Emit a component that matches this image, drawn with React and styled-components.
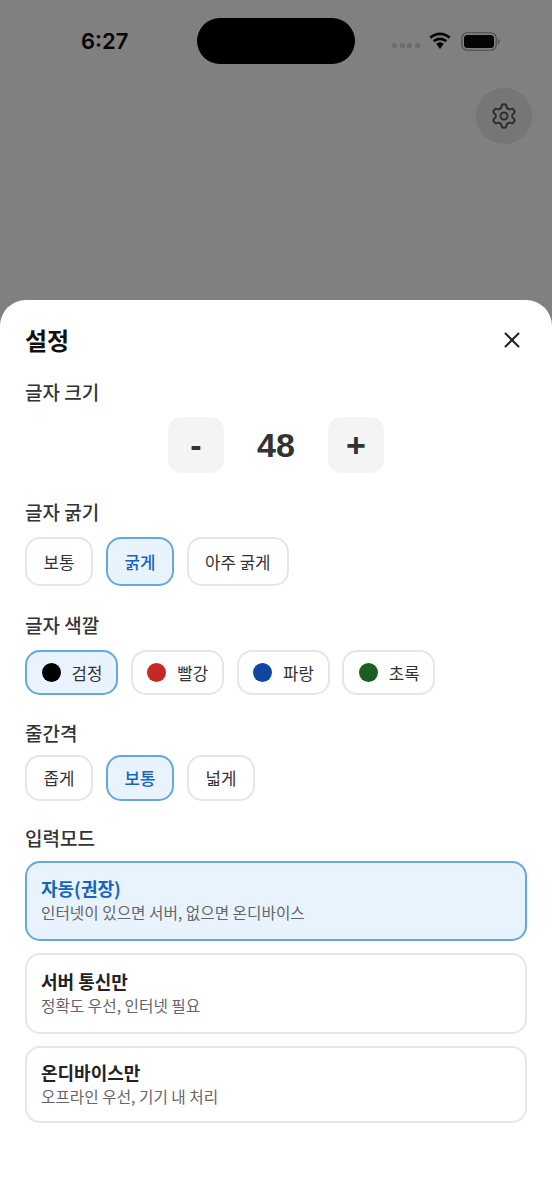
import React from 'react';
import styled, {createGlobalStyle} from 'styled-components';
import {Settings, X} from 'lucide-react';

const GlobalStyle = createGlobalStyle`
  html, body {
    margin: 0;
    padding: 0;
    background: #fff;
  }
  body {
    font-family: "Noto Sans CJK KR", "Noto Sans", sans-serif;
    color: #333;
  }
`;

const Page = styled.div`
  width: 552px;
  height: 1200px;
  overflow: hidden;
  background: #808080;
`;

const Backdrop = styled.div`
  height: 300px;
  display: flex;
  flex-direction: column;
`;

const StatusBar = styled.div`
  height: 46px;
  margin-top: 18px;
  padding: 0 51px 0 81px;
  display: flex;
  align-items: center;
`;

const Time = styled.span`
  width: 116px;
  flex: none;
  font-family: "Inter", sans-serif;
  font-size: 22px;
  font-weight: 600;
  color: #050505;
  margin-top: -1px;
`;

const Island = styled.div`
  width: 158px;
  height: 46px;
  flex: none;
  border-radius: 23px;
  background: #000;
`;

const Signal = styled.div`
  display: flex;
  gap: 2.500px;
  margin-left: 37px;
  margin-top: 9px;
`;

const Dot = styled.i`
  width: 5px;
  height: 5px;
  border-radius: 1.500px;
  background: #6d6d6d;
`;

const StatusIcon = styled.svg`
  display: block;
  margin-left: ${p => p.$gap}px;
  flex: none;
`;

const GearWrap = styled.div`
  align-self: flex-end;
  width: 56px;
  height: 56px;
  margin: 24px 20px 0 0;
  border-radius: 50%;
  background: #767676;
  display: flex;
  align-items: center;
  justify-content: center;
  color: #2e2e2e;
`;

const Sheet = styled.section`
  height: 900px;
  padding: 0 25px;
  background: #fff;
  box-sizing: border-box;
  border-radius: 26px 26px 0 0;
`;

const SheetHeader = styled.header`
  height: 40px;
  padding-top: 20px;
  display: flex;
  align-items: center;
  justify-content: space-between;
`;

const Title = styled.h1`
  margin: 0;
  font-size: 24px;
  line-height: 40px;
  font-weight: 700;
  color: #111;
`;

const CloseButton = styled.button`
  border: 0;
  padding: 0;
  background: none;
  width: 26px;
  height: 26px;
  margin-right: 2px;
  display: flex;
  align-items: center;
  justify-content: center;
  color: #222;
`;

const Label = styled.h2`
  margin: ${p => p.$top}px 0 0;
  font-size: 19px;
  line-height: 26px;
  font-weight: 500;
  color: #333;
`;

const Stepper = styled.div`
  margin-top: 12px;
  display: flex;
  justify-content: center;
  align-items: center;
`;

const StepButton = styled.button`
  width: 56px;
  height: 56px;
  border: 0;
  border-radius: 14px;
  background: #f4f4f4;
  font-family: "Liberation Sans", sans-serif;
  font-size: 34px;
  font-weight: 700;
  color: #333;
  padding: 0;
`;

const StepValue = styled.span`
  width: 104px;
  text-align: center;
  font-family: "Liberation Sans", sans-serif;
  font-size: 34px;
  font-weight: 700;
  color: #333;
`;

const ChipRow = styled.div`
  margin-top: ${p => p.$top}px;
  display: flex;
  gap: ${p => p.$gap || 13}px;
`;

const Chip = styled.button`
  box-sizing: border-box;
  height: ${p => p.$height}px;
  min-width: 68px;
  padding: 0 16px;
  border: 2px solid ${p => (p.$active ? '#62a9e0' : '#e6e6e6')};
  border-radius: 15px;
  background: ${p => (p.$active ? '#e8f3fd' : '#fff')};
  color: ${p => (p.$active ? '#1565c0' : '#333')};
  font-family: inherit;
  font-size: 16.800px;
  font-weight: ${p => (p.$active ? 500 : 400)};
  display: flex;
  align-items: center;
  justify-content: center;
  gap: 11px;
`;

const Swatch = styled.span`
  width: 19px;
  height: 19px;
  border-radius: 50%;
  background: ${p => p.$color};
`;

const ColorChip = styled(Chip)`
  width: 93px;
  padding: 0 0 0 1px;
  color: #333;
  font-weight: 400;
`;

const ModeList = styled.div`
  margin-top: 10px;
  display: flex;
  flex-direction: column;
  gap: 12px;
`;

const ModeCard = styled.div`
  box-sizing: border-box;
  height: ${p => p.$height}px;
  padding: 0 14px;
  border: 2px solid ${p => (p.$active ? '#62a9e0' : '#e6e6e6')};
  border-radius: 15px;
  background: ${p => (p.$active ? '#e8f3fd' : '#fff')};
  display: flex;
  flex-direction: column;
  justify-content: center;
`;

const ModeTitle = styled.div`
  font-size: 18px;
  line-height: 26px;
  font-weight: 600;
  margin-top: -2px;
  color: ${p => (p.$active ? '#1565c0' : '#222')};
`;

const ModeDesc = styled.div`
  font-size: 15.700px;
  line-height: 24px;
  color: #666;
`;

const WifiIcon = () => (
  <StatusIcon $gap={8} width="24" height="18" viewBox="0 0 24 18">
    <path d="M12 3.200c3.400 0 6.500 1.300 8.800 3.500l1.800-2C19.800 2 16.100.4 12 .4S4.200 2 1.400 4.700l1.800 2C5.500 4.500 8.600 3.200 12 3.200z" fill="#050505" />
    <path d="M12 8.200c2 0 3.900.8 5.300 2.100l1.900-2C17.300 6.500 14.800 5.400 12 5.400s-5.300 1.100-7.200 2.900l1.900 2C8.100 9 10 8.200 12 8.200z" fill="#050505" />
    <path d="M12 10.300c-1.500 0-2.800.6-3.800 1.500L12 17l3.800-5.200c-1-.9-2.300-1.500-3.800-1.500z" fill="#050505" />
  </StatusIcon>
);

const BatteryIcon = () => (
  <StatusIcon $gap={9} width="39" height="19" viewBox="0 0 39 19">
    <rect x="0.750" y="0.750" width="34.500" height="17.500" rx="5.500" fill="none" stroke="#4a4a4a" strokeWidth="1.200" />
    <rect x="3" y="3" width="30" height="13" rx="3.500" fill="#050505" />
    <path d="M36.800 6.500c1.200.4 1.800 1.600 1.800 3s-.6 2.600-1.800 3z" fill="#555" />
  </StatusIcon>
);

const weights = [
  {name: '보통'},
  {name: '굵게', active: true},
  {name: '아주 굵게'},
];

const colors = [
  {name: '검정', color: '#000', active: true},
  {name: '빨강', color: '#c62828'},
  {name: '파랑', color: '#0d47a1'},
  {name: '초록', color: '#1b5e20'},
];

const spacings = [
  {name: '좁게'},
  {name: '보통', active: true},
  {name: '넓게'},
];

const modes = [
  {title: '자동(권장)', desc: '인터넷이 있으면 서버, 없으면 온디바이스', height: 80, active: true},
  {title: '서버 통신만', desc: '정확도 우선, 인터넷 필요', height: 81},
  {title: '온디바이스만', desc: '오프라인 우선, 기기 내 처리', height: 77},
];

export default function App() {
  return (
    <Page>
      <GlobalStyle />
      <Backdrop>
        <StatusBar>
          <Time>6:27</Time>
          <Island />
          <Signal>
            <Dot />
            <Dot />
            <Dot />
            <Dot />
          </Signal>
          <WifiIcon />
          <BatteryIcon />
        </StatusBar>
        <GearWrap>
          <Settings size={28} strokeWidth={1.7} />
        </GearWrap>
      </Backdrop>
      <Sheet>
        <SheetHeader>
          <Title>설정</Title>
          <CloseButton aria-label="닫기">
            <X size={28} strokeWidth={1.8} />
          </CloseButton>
        </SheetHeader>

        <Label $top={19}>글자 크기</Label>
        <Stepper>
          <StepButton>-</StepButton>
          <StepValue>48</StepValue>
          <StepButton>+</StepButton>
        </Stepper>

        <Label $top={26}>글자 굵기</Label>
        <ChipRow $top={12}>
          {weights.map(w => (
            <Chip key={w.name} $height={49} $active={w.active}>{w.name}</Chip>
          ))}
        </ChipRow>

        <Label $top={26}>글자 색깔</Label>
        <ChipRow $top={12} $gap={12.750}>
          {colors.map(c => (
            <ColorChip key={c.name} $height={45} $active={c.active}>
              <Swatch $color={c.color} />
              {c.name}
            </ColorChip>
          ))}
        </ChipRow>

        <Label $top={25}>줄간격</Label>
        <ChipRow $top={9}>
          {spacings.map(s => (
            <Chip key={s.name} $height={46} $active={s.active}>{s.name}</Chip>
          ))}
        </ChipRow>

        <Label $top={24}>입력모드</Label>
        <ModeList>
          {modes.map(m => (
            <ModeCard key={m.title} $height={m.height} $active={m.active}>
              <ModeTitle $active={m.active}>{m.title}</ModeTitle>
              <ModeDesc>{m.desc}</ModeDesc>
            </ModeCard>
          ))}
        </ModeList>
      </Sheet>
    </Page>
  );
}
